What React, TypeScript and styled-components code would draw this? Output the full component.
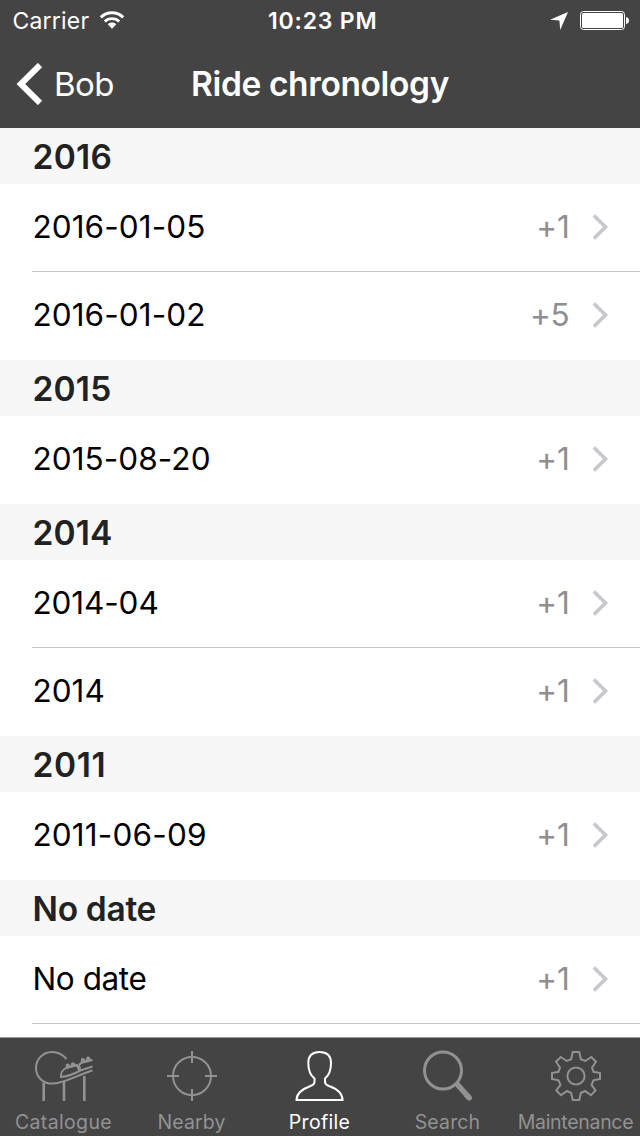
import React from "react";
import styled, { createGlobalStyle } from "styled-components";

const GlobalStyle = createGlobalStyle`
  * { box-sizing: border-box; }
  body { margin: 0; background: #fff; font-family: Inter, "Liberation Sans", sans-serif; }
`;

const Screen = styled.div`
  width: 640px;
  height: 1136px;
  display: flex;
  flex-direction: column;
  overflow: hidden;
  background: #fff;
`;

const Header = styled.header`
  flex: none;
  height: 128px;
  background: #444;
  color: #fff;
`;

const StatusBar = styled.div`
  height: 40px;
  display: grid;
  grid-template-columns: 1fr auto 1fr;
  grid-template-rows: 40px;
  align-items: center;
  padding: 0 11px 0 12.5px;
`;

const Carrier = styled.div`
  display: flex;
  align-items: center;
  gap: 10px;
  height: 40px;
`;

const CarrierName = styled.span`
  padding-top: 2px;
  font-size: 23px;
  letter-spacing: 0.2px;
  line-height: 38px;
`;

const Clock = styled.div`
  padding: 2px 0 0 4px;
  font-size: 23px;
  font-weight: 600;
  letter-spacing: 0.8px;
  line-height: 38px;
`;

const Indicators = styled.div`
  display: flex;
  align-items: center;
  justify-content: flex-end;
  gap: 12px;
  padding-top: 1px;
`;

const NavBar = styled.div`
  height: 88px;
  display: grid;
  grid-template-columns: 1fr auto 1fr;
  align-items: center;
  padding: 0 16px;
`;

const BackButton = styled.button`
  display: flex;
  align-items: center;
  gap: 11px;
  padding: 0;
  border: 0;
  background: none;
  color: inherit;
`;

const BackLabel = styled.span`
  font: 400 33px/44px Inter, "Liberation Sans", sans-serif;
  letter-spacing: -0.6px;
`;

const Title = styled.h1`
  margin: 0;
  font-size: 33.5px;
  font-weight: 600;
  line-height: 44px;
  letter-spacing: -0.37px;
`;

const List = styled.main`
  flex: 1;
  min-height: 0;
  overflow: hidden;
`;

const SectionTitle = styled.h2<{ $spacing: number }>`
  margin: 0;
  height: 56px;
  padding: 1px 32px 0 32.5px;
  background: #f7f7f7;
  color: #222;
  font-size: 33.5px;
  font-weight: 600;
  line-height: 56px;
  letter-spacing: ${(p) => p.$spacing}px;
`;

const Row = styled.div`
  height: 88px;
  padding-left: 32px;
`;

const RowBody = styled.div<{ $divided: boolean }>`
  height: 88px;
  display: flex;
  align-items: center;
  padding: 0 31px 1px 0;
  border-bottom: 1px solid ${(p) => (p.$divided ? "#c8c7cc" : "transparent")};
  font-size: 31.5px;
  line-height: 40px;
`;

const RowLabel = styled.span<{ $spacing: number }>`
  flex: 1;
  padding-left: 0.4px;
  color: #000;
  letter-spacing: ${(p) => p.$spacing}px;
`;

const RowCount = styled.span`
  margin-right: 21.5px;
  color: #8e8e93;
  letter-spacing: -0.2px;
`;

const TabBar = styled.nav`
  flex: none;
  height: 99px;
  display: grid;
  grid-template-columns: repeat(5, 128px);
  border-top: 1px solid #9b9b9b;
  background: #444;
`;

const Tab = styled.div<{ $active: boolean }>`
  display: flex;
  flex-direction: column;
  align-items: center;
  padding-top: 12px;
  color: ${(p) => (p.$active ? "#fff" : "#929292")};
`;

const TabLabel = styled.span<{ $spacing: number }>`
  margin-top: 8px;
  padding-right: 1px;
  font-size: 19.5px;
  line-height: 24px;
  white-space: nowrap;
  letter-spacing: ${(p) => p.$spacing}px;
`;

const TabGlyph = ({ children }: { children: React.ReactNode }) => (
  <svg width="60" height="52" viewBox="0 0 60 52" fill="none" stroke="currentColor" strokeWidth="2">
    {children}
  </svg>
);

const WifiIcon = () => (
  <svg width="26" height="18" viewBox="0 0 26 18" fill="none" stroke="#fff" strokeWidth="2.9">
    <path d="M1.8 6.4C8 .2 18 .2 24.2 6.4" />
    <path d="M5.8 10.5C9.8 6.7 16.2 6.7 20.2 10.5" />
    <path d="M8.7 13.3C11.2 11 14.8 11 17.3 13.3L13 17.8Z" fill="#fff" stroke="none" />
  </svg>
);

const LocationIcon = () => (
  <svg width="18" height="19" viewBox="0 -1 18 19">
    <path d="M18 0L10.2 18L9.4 8.6L0 7.8Z" fill="#fff" />
  </svg>
);

const BatteryIcon = () => (
  <svg width="49" height="19" viewBox="0 0 49 19">
    <rect x=".5" y=".5" width="44" height="18" rx="3" fill="none" stroke="#fff" />
    <rect x="2" y="2" width="41" height="15" rx="1.5" fill="#fff" />
    <path d="M46 6q3 .5 3 3.5T46 13Z" fill="#fff" />
  </svg>
);

const BackIcon = () => (
  <svg width="27" height="42" viewBox="0 0 27 42" fill="none" stroke="#fff" strokeWidth="6">
    <path d="M24 2L4.8 21L24 40" />
  </svg>
);

const Chevron = () => (
  <svg width="18" height="28" viewBox="0 0 18 28" fill="none" stroke="#c7c7cc" strokeWidth="3.6">
    <path d="M2.9 2.4L14.5 14L2.9 25.6" />
  </svg>
);

const CoasterIcon = () => (
  <TabGlyph>
    <path d="M32.5 9C28 3.8 23 1.9 18 2C8.500 2.200 2 9.500 2 18C2 27 9 33.600 18 33.600C30 33.600 43 25 58.500 20.500" />
    <path d="M27 27C26.500 23.500 28.500 19.800 31.500 18.300L43 15L45.500 21C40 24 34 26.500 27 27ZM45 15L47 13L58.500 10M45 15L46.500 20.500L58.500 16.500" />
    <g fill="currentColor" stroke="none">
      <circle cx="33.700" cy="15.700" r="2.100" />
      <circle cx="39" cy="14.300" r="2.100" />
      <circle cx="48.800" cy="10" r="2.100" />
      <circle cx="54.200" cy="8.600" r="2.100" />
      <path d="M31 19L32 16.500L42 14L44 16ZM46 13.500L47.500 11L56 8.500L58.500 10.500Z" />
    </g>
    <path d="M9.700 32.500V51M30 32V51M50.300 26V51" strokeWidth="2.600" />
  </TabGlyph>
);

const CrosshairIcon = () => (
  <TabGlyph>
    <circle cx="30" cy="26" r="19" />
    <path d="M30 1V13M30 39V51M5 26H17M43 26H55" />
  </TabGlyph>
);

const PersonIcon = () => (
  <TabGlyph>
    <path d="M6.500 50C6.500 42 14 38.500 20.500 36C23.500 34.800 24.500 33.500 24.500 32V28.500C20.500 25.500 18.300 21 18.300 13C18.300 6 22 2 29.500 2S41 6 41 13C41 21 38.800 25.500 35 28.500V32C35 33.500 36 34.800 39 36C46 38.500 52.500 42 52.500 50Z" />
  </TabGlyph>
);

const SearchIcon = () => (
  <TabGlyph>
    <circle cx="25" cy="20.500" r="18.500" strokeWidth="3" />
    <path d="M38.500 33.500L51 47.500" strokeWidth="5.500" />
    <path d="M49 45.500L51.200 47.800" strokeWidth="5.500" strokeLinecap="round" />
  </TabGlyph>
);

const GearIcon = () => (
  <TabGlyph>
    <path d="M26.8 2H33.200L34.800 9.200L39.300 11L45.300 7L50 11.700L46 17.700L47.500 21.800L54 23V29L47.500 30.300L45.500 34.800L49.500 40.500L45 45.300L39 41L34.800 43L33.300 50H26.700L25.200 43L21 41L15 45.300L10.300 40.500L14.500 34.800L12.500 30.300L6 29V23L12.500 21.800L14 17.700L10 11.700L14.700 7L20.700 11L25.200 9.200Z" />
    <circle cx="30" cy="26" r="8.600" />
  </TabGlyph>
);

type RowItem = { label: string; count: string; spacing: number };
type SectionItem = { title: string; spacing: number; rows: RowItem[]; continues?: boolean };

const sections: SectionItem[] = [
  {
    title: "2016",
    spacing: 0.3,
    rows: [
      { label: "2016-01-05", count: "+1", spacing: 0.1 },
      { label: "2016-01-02", count: "+5", spacing: 0.1 },
    ],
  },
  { title: "2015", spacing: 0.2, rows: [{ label: "2015-08-20", count: "+1", spacing: 0.08 }] },
  {
    title: "2014",
    spacing: 0.15,
    rows: [
      { label: "2014-04", count: "+1", spacing: -0.1 },
      { label: "2014", count: "+1", spacing: 0.05 },
    ],
  },
  { title: "2011", spacing: 0.6, rows: [{ label: "2011-06-09", count: "+1", spacing: 0.19 }] },
  {
    title: "No date",
    spacing: -0.3,
    rows: [{ label: "No date", count: "+1", spacing: -0.4 }],
    continues: true,
  },
];

const tabs = [
  { label: "Catalogue", Icon: CoasterIcon, spacing: 0.35 },
  { label: "Nearby", Icon: CrosshairIcon, spacing: 0.1 },
  { label: "Profile", Icon: PersonIcon, spacing: 0.3 },
  { label: "Search", Icon: SearchIcon, spacing: 0.15 },
  { label: "Maintenance", Icon: GearIcon, spacing: -0.3 },
];

export default function App() {
  return (
    <Screen>
      <GlobalStyle />
      <Header>
        <StatusBar>
          <Carrier><CarrierName>Carrier</CarrierName><WifiIcon /></Carrier>
          <Clock>10:23 PM</Clock>
          <Indicators><LocationIcon /><BatteryIcon /></Indicators>
        </StatusBar>
        <NavBar>
          <BackButton><BackIcon /><BackLabel>Bob</BackLabel></BackButton>
          <Title>Ride chronology</Title>
        </NavBar>
      </Header>
      <List>
        {sections.map((section) => (
          <section key={section.title}>
            <SectionTitle $spacing={section.spacing}>{section.title}</SectionTitle>
            {section.rows.map((row, i) => (
              <Row key={row.label}>
                <RowBody $divided={section.continues || i < section.rows.length - 1}>
                  <RowLabel $spacing={row.spacing}>{row.label}</RowLabel>
                  <RowCount>{row.count}</RowCount>
                  <Chevron />
                </RowBody>
              </Row>
            ))}
          </section>
        ))}
      </List>
      <TabBar>
        {tabs.map(({ label, Icon, spacing }) => (
          <Tab key={label} $active={label === "Profile"}>
            <Icon />
            <TabLabel $spacing={spacing}>{label}</TabLabel>
          </Tab>
        ))}
      </TabBar>
    </Screen>
  );
}
